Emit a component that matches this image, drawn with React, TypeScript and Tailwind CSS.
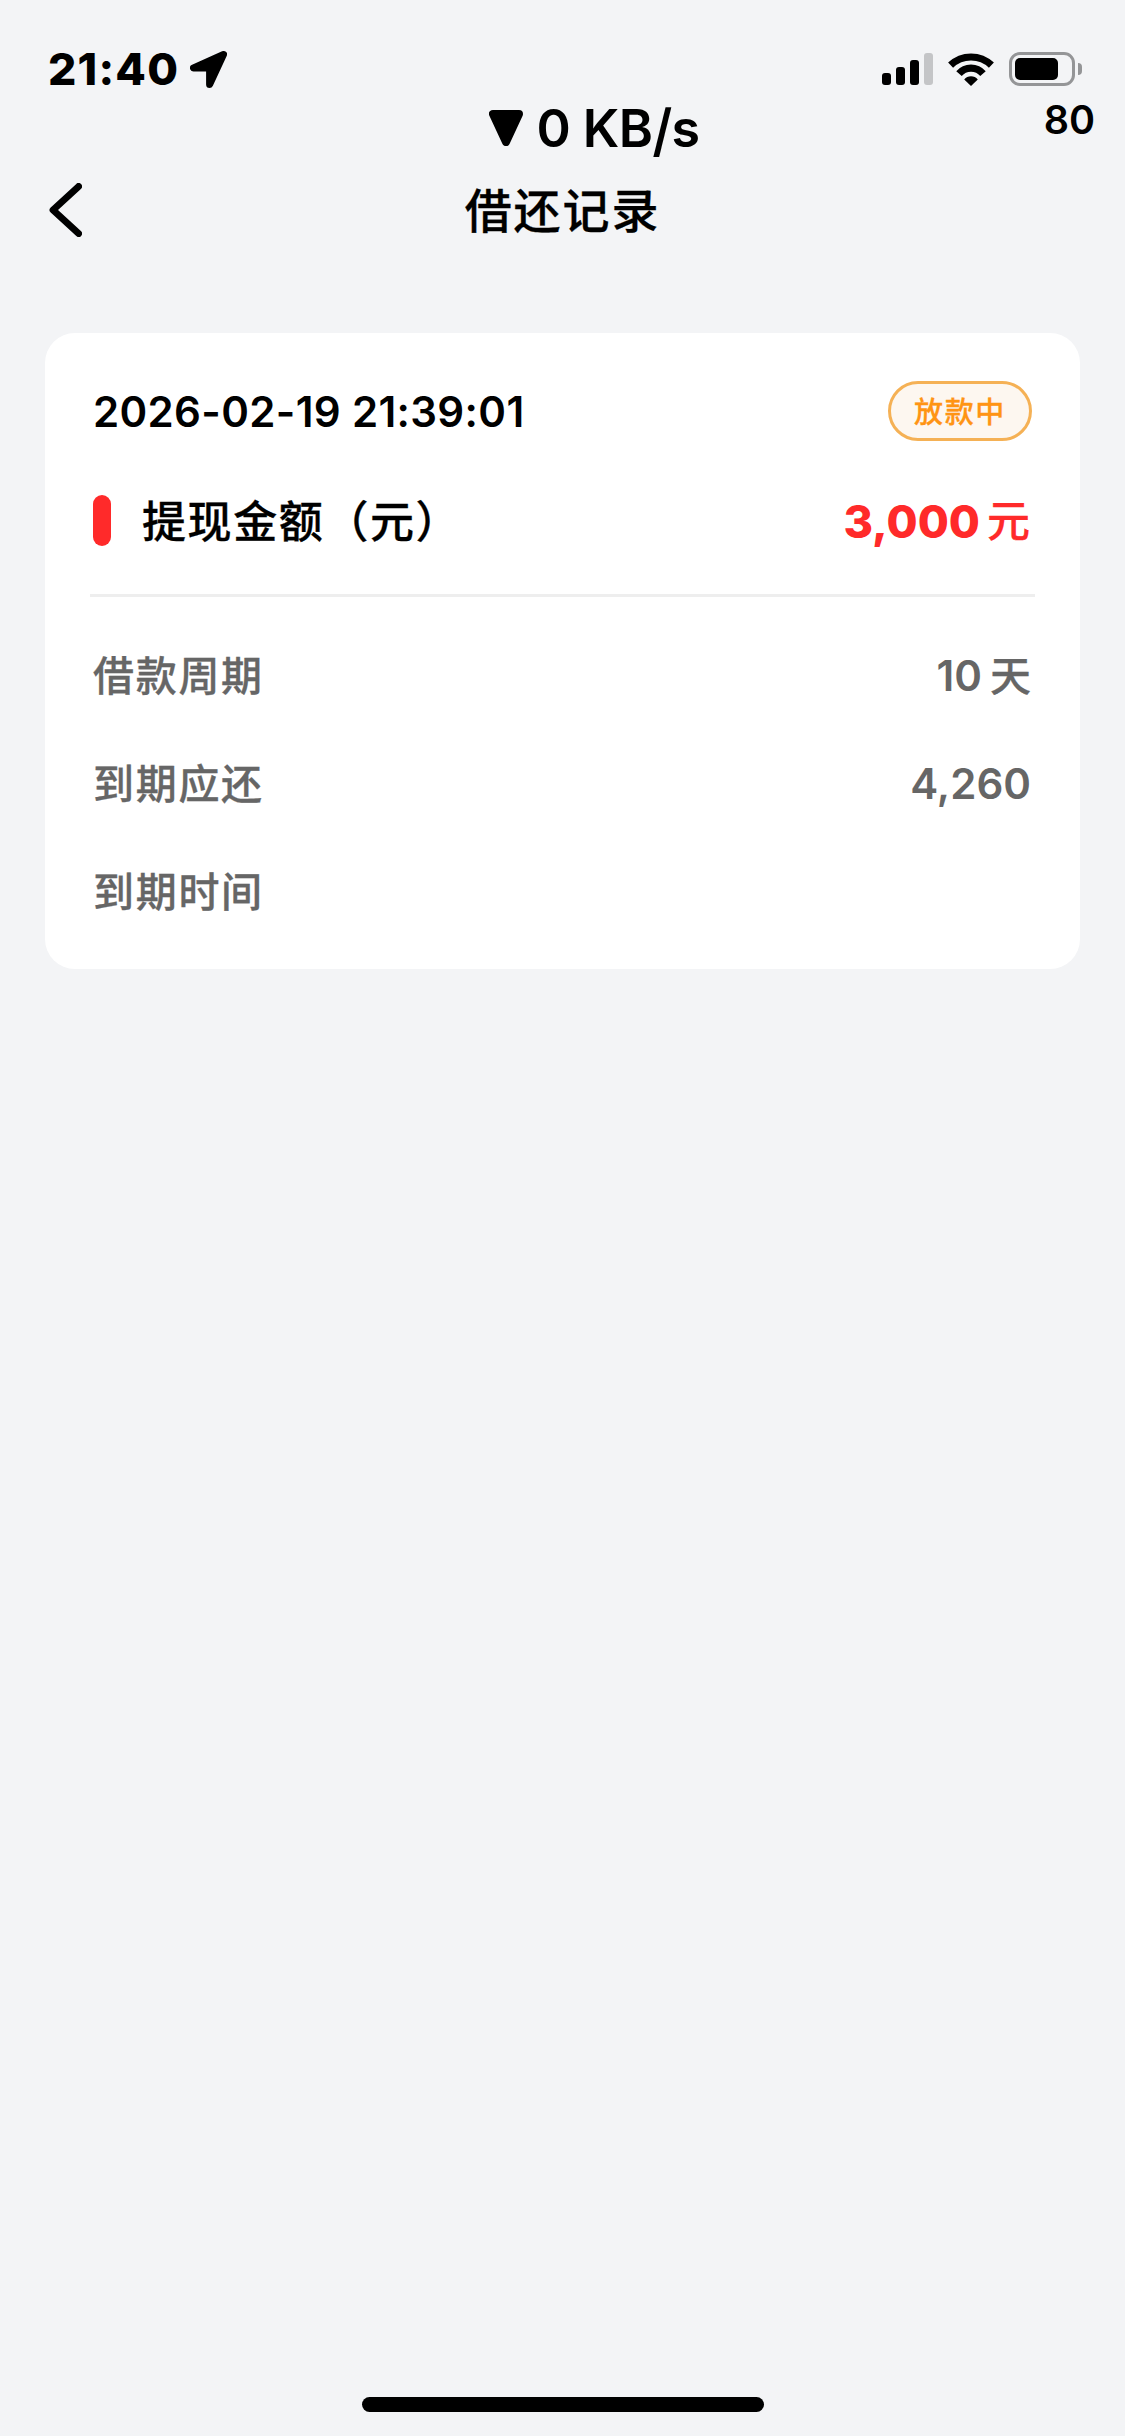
import type { ReactNode } from 'react';

/**
 * Loan Record Page
 *
 * Status bar, nav bar and a list of loan records
 */

interface LoanRecord {
  id: string;
  createdAt: string;
  status: string;
  amount: string;
  period: string;
  dueAmount: string;
  dueTime: string;
}

const records: LoanRecord[] = [
  {
    id: '1',
    createdAt: '2026-02-19 21:39:01',
    status: '放款中',
    amount: '3,000',
    period: '10',
    dueAmount: '4,260',
    dueTime: '',
  },
];

function LocationIcon() {
  return (
    <svg className="h-[37px] w-[37px]" viewBox="0 0 37 37">
      <path
        d="M33.5 3.5 L3.5 17 L19.6 17 L19.6 33.5 Z"
        fill="black"
        stroke="black"
        strokeWidth="7"
        strokeLinejoin="round"
      />
    </svg>
  );
}

function SignalIcon() {
  return (
    <div className="flex h-8 items-end gap-[5px]">
      <div className="h-3 w-[9px] rounded-[3px] bg-black" />
      <div className="h-[18px] w-[9px] rounded-[3px] bg-black" />
      <div className="h-[25px] w-[9px] rounded-[3px] bg-black" />
      <div className="h-8 w-[9px] rounded-[3px] bg-[#c4c5c7]" />
    </div>
  );
}

function WifiIcon() {
  return (
    <svg className="h-[33px] w-[46px]" viewBox="0 0 46 33">
      <path d="M23 33 L16.2 26.4 A9 9 0 0 1 29.8 26.4 Z" />
      <path d="M11 20.7 A15.8 15.8 0 0 1 35 20.7" fill="none" stroke="black" strokeWidth="7.2" />
      <path d="M2.6 12.2 A29.5 29.5 0 0 1 43.4 12.2" fill="none" stroke="black" strokeWidth="7.2" />
    </svg>
  );
}

function BatteryIcon() {
  return (
    <div className="flex items-center gap-[3px]">
      <div className="h-[34px] w-[66px] rounded-[11px] border-3 border-[#949597] p-[3px]">
        <div className="h-[22px] w-[43px] rounded-[5px] bg-black" />
      </div>
      <div className="h-3 w-1 rounded-r-full bg-[#949597]" />
    </div>
  );
}

function StatusBar() {
  return (
    <div className="pt-[42px] font-semibold">
      <div className="flex h-[54px] items-center justify-between pr-[43px] pl-12">
        <div className="flex items-center">
          <span className="w-[142px] text-[44.5px] leading-none font-extrabold tracking-[1.2px]">21:40</span>
          <LocationIcon />
        </div>
        <div className="flex items-center">
          <SignalIcon />
          <div className="mr-[15px] ml-[15px]">
            <WifiIcon />
          </div>
          <BatteryIcon />
        </div>
      </div>
      <div className="grid h-16 grid-cols-[1fr_auto_1fr]">
        <div />
        <div className="ml-[63px] flex items-center gap-[14px]">
          <svg className="h-9 w-[34px]" viewBox="0 0 34 36">
            <path
              d="M4 4 L30 4 L17 32 Z"
              fill="black"
              stroke="black"
              strokeWidth="8"
              strokeLinejoin="round"
            />
          </svg>
          <span className="pt-0.5 text-[52px] leading-none tracking-[-0.6px]">
            0 KB<span className="inline-block origin-top scale-y-110">/</span>s
          </span>
        </div>
        <span className="mt-1 mr-[30px] text-right text-[39.5px] leading-[40px]">80</span>
      </div>
    </div>
  );
}

function NavBar({ title }: { title: string }) {
  return (
    <div className="grid h-[100px] grid-cols-[1fr_auto_1fr] items-center">
      <button className="ml-[49px] w-[33px]" aria-label="返回">
        <svg className="h-[54px] w-[33px]" viewBox="0 0 33 54">
          <path
            d="M29.6 3.4 L4 27 L29.6 50.6"
            fill="none"
            stroke="black"
            strokeWidth="6.8"
            strokeLinecap="round"
            strokeLinejoin="round"
          />
        </svg>
      </button>
      <h1 className="text-[47px] leading-none font-medium tracking-[1.9px] [-webkit-text-stroke:0.3px]">
        {title}
      </h1>
      <div />
    </div>
  );
}

function InfoRow({ label, children }: { label: string; children?: ReactNode }) {
  return (
    <div className="flex h-[108px] items-center justify-between pt-0.5 text-[42px] leading-none font-medium text-[#666]">
      <span className="text-[41px] tracking-[1.7px] [-webkit-text-stroke:0.3px]">{label}</span>
      <span className="flex items-center font-semibold">{children}</span>
    </div>
  );
}

function RecordCard({ record }: { record: LoanRecord }) {
  return (
    <div className="mx-[45px] h-[636px] rounded-[30px] bg-white px-[45px] pt-12">
      {/* Card Header */}
      <div className="flex h-[60px] items-center justify-between pr-[3px] pl-[3px]">
        <span className="pt-px text-[42px] leading-none font-semibold tracking-[0.35px]">
          {record.createdAt}
        </span>
        <span className="flex h-[60px] w-[144px] items-center justify-center rounded-full border-3 border-[#f5b155] bg-[#fdf7f0] pt-0.5 text-[29px] leading-none font-medium tracking-[1.6px] text-[#ff9414] [-webkit-text-stroke:0.3px]">
          {record.status}
        </span>
      </div>

      {/* Amount */}
      <div className="mt-[54px] flex h-[51px] items-center justify-between pr-[5px] pl-[3px]">
        <div className="flex items-center">
          <div className="h-[51px] w-[18px] rounded-full bg-[#ff2a2a]" />
          <span className="ml-[31px] pt-0.5 text-[44px] leading-none font-medium tracking-[1.6px] [-webkit-text-stroke:0.3px]">
            提现金额（元）
          </span>
        </div>
        <div className="flex items-center text-[#ff2a2a]">
          <span className="pt-px text-[45px] leading-none font-extrabold">{record.amount}</span>
          <span className="ml-[7px] pt-0.5 text-[43px] leading-none font-medium [-webkit-text-stroke:0.3px]">元</span>
        </div>
      </div>

      <div className="mt-12 h-[3px] bg-[#eee]" />

      {/* Details */}
      <div className="mt-6 pr-[4px] pl-[3px]">
        <InfoRow label="借款周期">
          <span>{record.period}</span>
          <span className="ml-2 text-[41px] font-medium [-webkit-text-stroke:0.3px]">天</span>
        </InfoRow>
        <InfoRow label="到期应还">{record.dueAmount}</InfoRow>
        <InfoRow label="到期时间">{record.dueTime}</InfoRow>
      </div>
    </div>
  );
}

export default function App() {
  return (
    <div className="flex h-[2436px] w-[1125px] flex-col bg-[#f3f4f6] font-['Inter','Noto_Sans_CJK_SC',sans-serif] text-black">
      <StatusBar />
      <NavBar title="借还记录" />
      <div className="flex-1 pt-[73px]">
        {records.map((record) => (
          <RecordCard key={record.id} record={record} />
        ))}
      </div>
      {/* Home Indicator */}
      <div className="mx-auto mb-6 h-[15px] w-[402px] rounded-full bg-black" />
    </div>
  );
}
